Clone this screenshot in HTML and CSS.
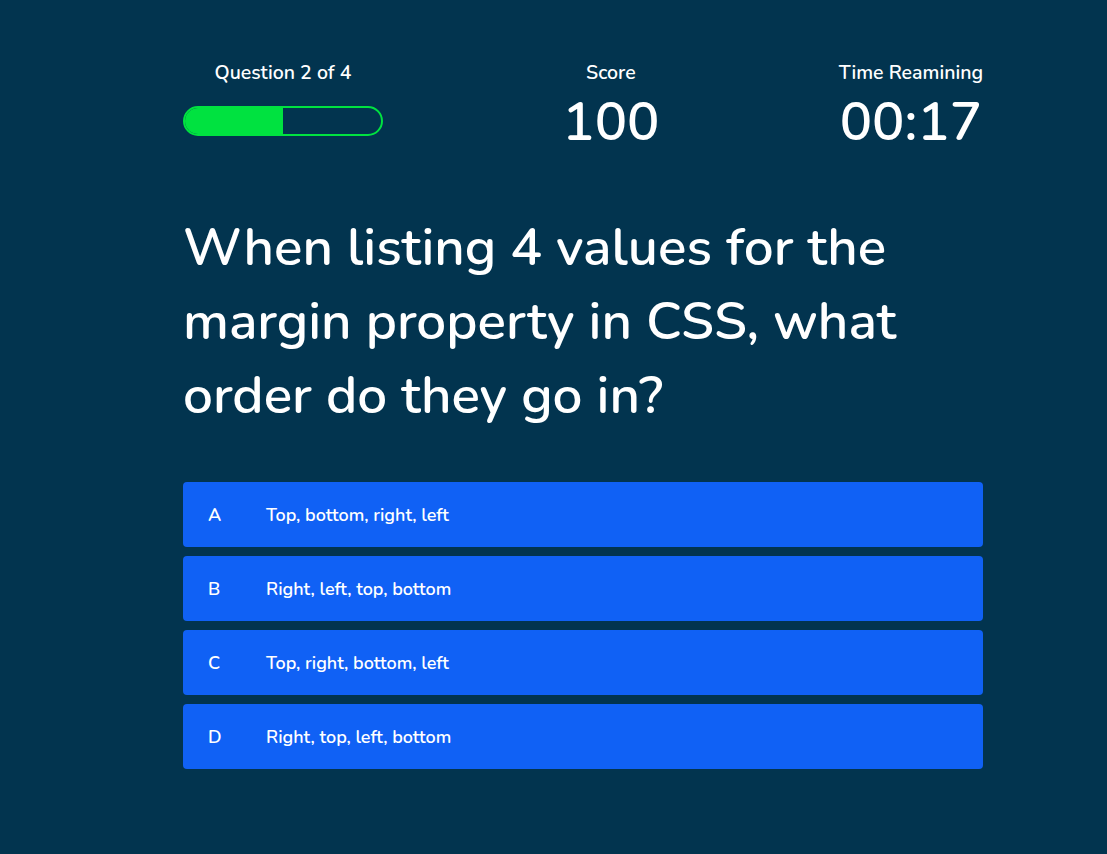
FILE: index.html
```html
<!DOCTYPE html>
<html>
<head>
<meta charset="utf-8">
<link rel="stylesheet" href="styles.css">
</head>
<body>
<div class="page">
  <div class="quiz">
    <header class="hud">
      <div class="hud-item progress-item">
        <p class="hud-label">Question 2 of 4</p>
        <div class="progress"><div class="progress-fill" style="width:50%"></div></div>
      </div>
      <div class="hud-item">
        <p class="hud-label">Score</p>
        <p class="hud-value">100</p>
      </div>
      <div class="hud-item">
        <p class="hud-label">Time Reamining</p>
        <p class="hud-value">00:17</p>
      </div>
    </header>
    <h1 class="question">When listing 4 values for the margin property in CSS, what order do they go in?</h1>
    <div class="choices">
      <div class="choice"><span class="choice-prefix">A</span><span class="choice-text">Top, bottom, right, left</span></div>
      <div class="choice"><span class="choice-prefix">B</span><span class="choice-text">Right, left, top, bottom</span></div>
      <div class="choice"><span class="choice-prefix">C</span><span class="choice-text">Top, right, bottom, left</span></div>
      <div class="choice"><span class="choice-prefix">D</span><span class="choice-text">Right, top, left, bottom</span></div>
    </div>
  </div>
</div>
</body>
</html>
```

FILE: styles.css
```css
html, body {
  margin: 0;
  padding: 0;
  background: #02344f;
  color: #ffffff;
  font-family: "Nunito", "Open Sans", "Lato", sans-serif;
}
.page {
  min-height: 854px;
  padding: 61px 0 0 183px;
  box-sizing: border-box;
}
.quiz {
  width: 800px;
}
.hud {
  display: flex;
  justify-content: space-between;
  align-items: flex-start;
}
.hud-item {
  display: flex;
  flex-direction: column;
  align-items: center;
}
.progress-item {
  width: 200px;
}
.hud-label {
  margin: 0;
  font-size: 19.5px;
  line-height: 24px;
  font-weight: 600;
}
.hud-value {
  margin: 7px 0 0;
  font-size: 54px;
  line-height: 60px;
  font-weight: 600;
}
.progress {
  margin-top: 21px;
  width: 200px;
  height: 30px;
  border: 2px solid #00e240;
  border-radius: 15px;
  box-sizing: border-box;
  overflow: hidden;
}
.progress-fill {
  height: 100%;
  background: #00e240;
}
.question {
  margin: 59px 0 0;
  font-size: 53px;
  line-height: 74px;
  font-weight: 600;
  width: 760px;
}
.choices {
  margin-top: 49px;
  display: flex;
  flex-direction: column;
  gap: 9px;
}
.choice {
  display: flex;
  align-items: center;
  height: 65px;
  background: #1061f5;
  border-radius: 4px;
  padding-left: 25px;
  font-size: 18px;
  font-weight: 600;
}
.choice-prefix {
  width: 58px;
}
```
